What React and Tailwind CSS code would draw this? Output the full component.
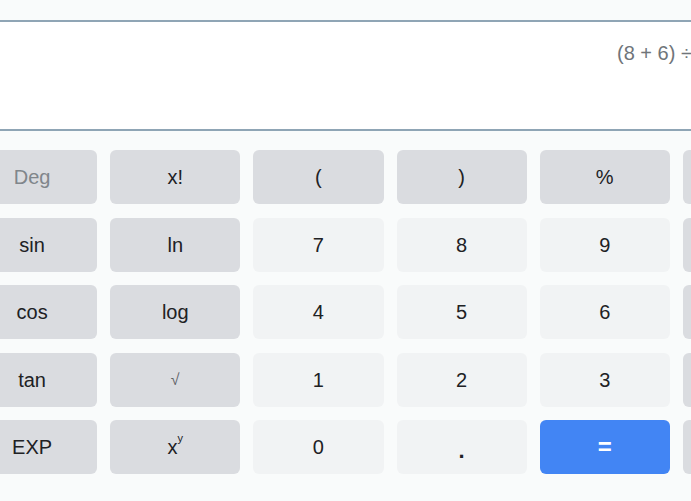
import React from 'react'

const rows = [
  [
    { label: 'Deg', kind: 'fn', muted: true },
    { label: 'x!', kind: 'fn' },
    { label: '(', kind: 'fn' },
    { label: ')', kind: 'fn' },
    { label: '%', kind: 'fn' },
    { label: 'AC', kind: 'fn' }
  ],
  [
    { label: 'sin', kind: 'fn' },
    { label: 'ln', kind: 'fn' },
    { label: '7', kind: 'num' },
    { label: '8', kind: 'num' },
    { label: '9', kind: 'num' },
    { label: '÷', kind: 'fn' }
  ],
  [
    { label: 'cos', kind: 'fn' },
    { label: 'log', kind: 'fn' },
    { label: '4', kind: 'num' },
    { label: '5', kind: 'num' },
    { label: '6', kind: 'num' },
    { label: '×', kind: 'fn' }
  ],
  [
    { label: 'tan', kind: 'fn' },
    { label: '√', kind: 'fn' },
    { label: '1', kind: 'num' },
    { label: '2', kind: 'num' },
    { label: '3', kind: 'num' },
    { label: '−', kind: 'fn' }
  ],
  [
    { label: 'EXP', kind: 'fn' },
    { label: 'pow', kind: 'fn' },
    { label: '0', kind: 'num' },
    { label: 'dot', kind: 'num' },
    { label: '=', kind: 'eq' },
    { label: '+', kind: 'fn' }
  ]
]

function Key({ item }) {
  const base = 'h-[54px] rounded-[6px] flex items-center justify-center text-[20px]'
  let color = 'bg-[#dadce0] text-[#202124]'
  if (item.kind === 'eq') color = 'bg-[#4285f4] text-white'
  else if (item.kind === 'num') color = 'bg-[#f1f3f4] text-[#202124]'
  else if (item.muted) color = 'bg-[#dadce0] text-[#80868b]'

  let content = item.label
  if (item.label === 'pow') {
    content = (
      <span className="flex items-start">
        <span>x</span>
        <span className="text-[11px] leading-none mt-[1px]">y</span>
      </span>
    )
  } else if (item.label === 'dot') {
    content = <span className="text-[22px] font-bold leading-none mt-[8px]">.</span>
  } else if (item.label === '=') {
    content = <span className="text-[24px] font-bold">=</span>
  } else if (item.label === '√') {
    content = <span className="text-[16px] text-[#5f6368]">√</span>
  }

  return <div className={`${base} ${color}`}>{content}</div>
}

export default function App() {
  return (
    <div
      className="w-[691px] h-[501px] overflow-hidden bg-[#f9fbfb]"
      style={{ fontFamily: '"Liberation Sans", Arial, sans-serif' }}
    >
      <div className="w-[846px] ml-[-33px] pt-[20px]">
        <div className="h-[111px] bg-white border-y-2 border-[#8fa5b5] pt-[16px] pl-[650px] text-[20px] text-[#70757a] whitespace-nowrap">
          (8 + 6) ÷ 2
        </div>
        <div className="grid grid-cols-6 gap-x-[13px] gap-y-[13.5px] mt-[19px]">
          {rows.flat().map((item, i) => (
            <Key key={i} item={item} />
          ))}
        </div>
      </div>
    </div>
  )
}
